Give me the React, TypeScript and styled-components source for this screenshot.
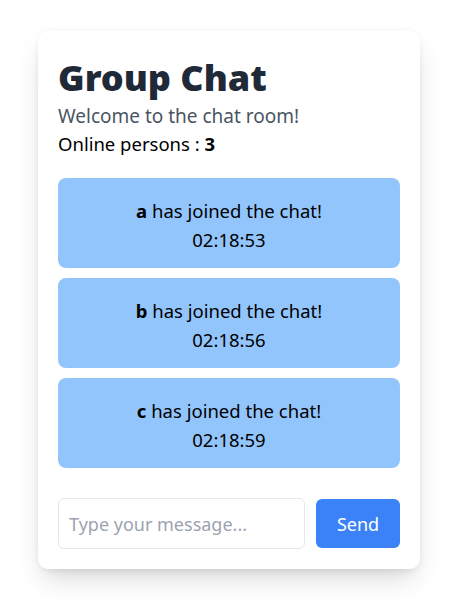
import React from "react";
import styled, { createGlobalStyle } from "styled-components";

const Global = createGlobalStyle`
  html, body { margin: 0; padding: 0; background: #ffffff; }
  body { font-family: "Noto Sans", "Open Sans", sans-serif; color: #111827; min-height: 611px; }
  * { box-sizing: border-box; }
`;

const Page = styled.div`
  padding: 31px 0 40px 38px;
`;

const Card = styled.div`
  width: 382px;
  background: #ffffff;
  border-radius: 10px;
  box-shadow: 0 14px 28px -6px rgba(0,0,0,0.16), 0 6px 12px -6px rgba(0,0,0,0.1), 0 0 6px rgba(0,0,0,0.04);
  padding: 23px 20px 20px 20px;
  display: flex;
  flex-direction: column;
`;

const Title = styled.h1`
  margin: 0;
  font-size: 36px;
  line-height: 48px;
  font-weight: 900;
  color: #1f2937;
`;

const Subtitle = styled.p`
  margin: 0;
  font-size: 19px;
  line-height: 28px;
  color: #4b5563;
`;

const Online = styled.p`
  margin: 0;
  font-size: 18.5px;
  line-height: 28px;
  color: #000;
  b { font-weight: 700; }
`;

const Messages = styled.div`
  margin-top: 20px;
  display: flex;
  flex-direction: column;
  gap: 10px;
`;

const Message = styled.div`
  background: #93c5fd;
  border-radius: 8px;
  padding: 18px 16px 14px;
  text-align: center;
  font-size: 18.5px;
  line-height: 29px;
  color: #000;
  b { font-weight: 700; }
`;

const Form = styled.div`
  margin-top: 30px;
  display: flex;
  gap: 11px;
  align-items: center;
`;

const Input = styled.input`
  flex: 1;
  min-width: 0;
  height: 51px;
  border: 1px solid #e5e7eb;
  border-radius: 6px;
  padding: 0 10px;
  font-family: inherit;
  font-size: 18px;
  color: #111827;
  outline: none;
  &::placeholder { color: #9ca3af; }
`;

const Button = styled.button`
  width: 84px;
  height: 49px;
  border: none;
  border-radius: 6px;
  background: #3b82f6;
  color: #ffffff;
  font-family: inherit;
  font-size: 18px;
`;

const messages = [
  { name: "a", time: "02:18:53" },
  { name: "b", time: "02:18:56" },
  { name: "c", time: "02:18:59" },
];

export default function App() {
  return (
    <>
      <Global />
      <Page>
        <Card>
          <Title>Group Chat</Title>
          <Subtitle>Welcome to the chat room!</Subtitle>
          <Online>Online persons : <b>3</b></Online>
          <Messages>
            {messages.map((m) => (
              <Message key={m.name}>
                <div><b>{m.name}</b> has joined the chat!</div>
                <div>{m.time}</div>
              </Message>
            ))}
          </Messages>
          <Form>
            <Input placeholder="Type your message..." />
            <Button>Send</Button>
          </Form>
        </Card>
      </Page>
    </>
  );
}
